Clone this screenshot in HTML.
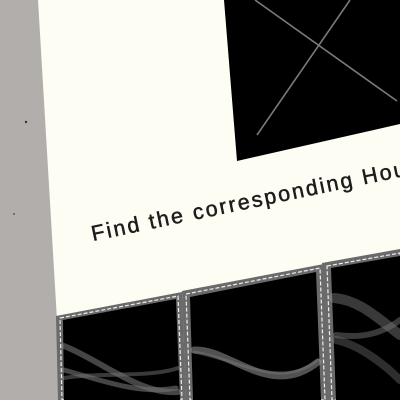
<!DOCTYPE html>
<html><head><style>html,body{margin:0;padding:0;width:400px;height:400px;overflow:hidden;background:#b0adac}</style></head>
<body>
<svg width="400" height="400" viewBox="0 0 400 400" xmlns="http://www.w3.org/2000/svg">
<rect width="400" height="400" fill="#b1aeac"/>
<polygon points="38,0 400,0 400,260 57,320" fill="#fdfdf4"/>
<polygon points="224,0 400,0 400,124 237,161" fill="#000"/>
<line x1="255" y1="0" x2="397" y2="101" stroke="#7a7a7a" stroke-width="1.6"/>
<line x1="350" y1="0" x2="257" y2="135" stroke="#7a7a7a" stroke-width="1.6"/>
<text x="0" y="0" transform="translate(93,241) rotate(-11.8)" font-family="Liberation Sans, sans-serif" font-size="21.5" letter-spacing="2.2" fill="#1c1c1c" stroke="#1c1c1c" stroke-width="0.5">Find the corresponding Hough</text>
<polygon points="56,316 182,292 186,400 58,400" fill="#6a6a6a"/>
<polygon points="60,318 178,296 182,400 62,400" fill="none" stroke="#eee" stroke-width="1.2" stroke-dasharray="4,2"/>
<polygon points="63,320 176,299 180,400 64,400" fill="#000"/>
<polygon points="182,291 324,264 330,400 186,400" fill="#6a6a6a"/>
<polygon points="186,294 320,268 325,400 190,400" fill="none" stroke="#eee" stroke-width="1.2" stroke-dasharray="4,2"/>
<polygon points="190,297 316,272 321,400 193,400" fill="#000"/>
<polygon points="322,263 400,249 400,400 328,400" fill="#6a6a6a"/>
<polygon points="327,266 400,253 400,400 332,400" fill="none" stroke="#eee" stroke-width="1.2" stroke-dasharray="4,2"/>
<polygon points="331,268 400,256 400,400 336,400" fill="#000"/>
<g fill="none" stroke="#9a9a9a" stroke-linecap="round" opacity="0.75">
<path d="M64,346 C100,360 140,395 178,392" stroke-width="6" opacity="0.6"/>
<path d="M64,370 C100,380 140,395 176,388" stroke-width="5" opacity="0.6"/>
<path d="M64,378 C100,372 150,378 178,368" stroke-width="4" opacity="0.5"/>
<path d="M194,350 C230,348 270,400 318,362" stroke-width="7" opacity="0.7"/>
<path d="M194,352 C240,360 280,390 318,360" stroke-width="3" opacity="0.6"/>
<path d="M334,298 C360,300 380,320 400,335" stroke-width="10" opacity="0.5"/>
<path d="M336,335 C360,338 380,335 400,320" stroke-width="6" opacity="0.5"/>
<path d="M336,340 C360,345 385,365 400,380" stroke-width="8" opacity="0.4"/>
</g>
<circle cx="26" cy="122" r="1.2" fill="#333"/>
<circle cx="14" cy="214" r="0.9" fill="#444"/>
</svg>
</body></html>
